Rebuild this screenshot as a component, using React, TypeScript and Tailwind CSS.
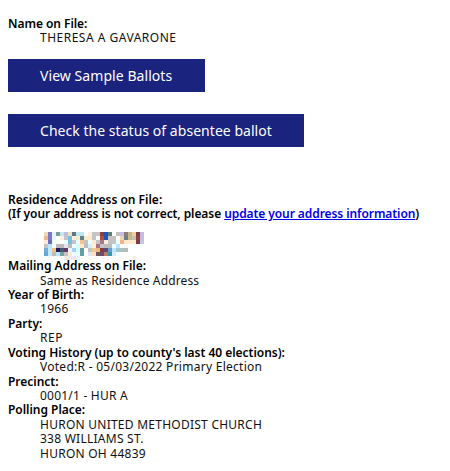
import React from "react";

// Pixelated block drawn over the hidden street address, 4px per cell
const redactedRows = [
  ["#f2d8b4", "#7c78c4", "#dff3fb", "#7f9a98", "#c5e6ec", "#bfbce2", "#e6e4c4", "#64747c", "#bfe6ee", "#bfe6ee", "#ffffff", "#fff0dc", "#c4c4c4", "#c4c4c4", "#8c4038", "#2454b8", "#5c807c", "#ffffff", "#c4c4c4", "#c8bce0", "#8c7c78", "#c4b490", "#ecd0a0", "#7c3c40", "#c4bce4"],
  ["#ecb888", "#7c78c4", "#e8f4ff", "#ffffff", "#fff0e4", "#c4c4c4", "#74c0e0", "#fff0dc", "#ffe8cc", "#5c8488", "#fde8cc", "#ffe8cc", "#c4c4c4", "#ffffff", "#b45038", "#2454b8", "#c4c4c4", "#c4c4c4", "#ffffff", "#f0d4b0", "#64808c", "#ccb888", "#c4c4b4", "#8c4040", "#c4bce4"],
  ["#ffe8cc", "#6c6cb8", "#eaffff", "#fffff0", "#ffffff", "#eaffff", "#74bce0", "#c4c4c4", "#eaffff", "#f0c490", "#c4c4c4", "#eaffff", "#ffe8d8", "#c4c4c4", "#ac7888", "#fff0dc", "#c4c4c4", "#c4c4c4", "#eaffff", "#ecb888", "#ffe8cc", "#ffe8cc", "#ffe8d0", "#7c3c40", "#bcc8e4"],
  ["#c4c4c4", "#bce4fc", "#f4ffff", "#bcbcc0", "#bcbcbc", "#e4e4ec", "#bcbcbc", "#eefcff", "#d4ffff", "#ffe8cc", "#bcbcbc", "#d4f0ff", "#fff0dc", "#ac7480", "#c4c4c4", "#bcbcbc", "#bcbcbc", "#eaffff", "#bce4fc", "#ffffff", "#fff8f0", "#ffffff", "#f8ffff", "#ffffff", "#ffffff"],
  ["#74acdc", "#c4e8ff", "#ecc47c", "#241c58", "#405c74", "#643c60", "#ecf4ff", "#a4d4f0", "#d8ffff", "#649ca0", "#ffffff", "#c4c4c4", "#eccc98", "#ecb880", "#844038", "#5c4c74", "#6c9ccc", "#bce4ff", "#9cc8d4", "#acc4bc", "#b4bcb8", "#ffffff", "#ffffff", "#ffffff", "#ffffff"],
  ["#64a8dc", "#c4e8ff", "#c4bcb0", "#bce4ff", "#74a4a4", "#c4c4c4", "#ffe8d0", "#eaffff", "#eaffff", "#64a0a4", "#ffffff", "#dce8f0", "#ffe0bc", "#6c5860", "#6c4c70", "#bc8060", "#2c9cb4", "#dce8ff", "#eaffff", "#ffffff", "#ffffff", "#ffffff", "#ffffff", "#ffffff", "#ffffff"],
  ["#ffffff", "#ffffff", "#ffffff", "#ffffff", "#ffffff", "#f0e8e4", "#ece8e8", "#ece8f0", "#eaf4ff", "#ffffff", "#ffffff", "#ffffff", "#ffffff", "#ffffff", "#ffffff", "#ffffff", "#ffffff", "#ffffff", "#ffffff", "#ffffff", "#ffffff", "#ffffff", "#faece8", "#ffffff", "#ffffff"],
];

const details = [
  { label: "Mailing Address on File:", lines: ["Same as Residence Address"], tracking: "tracking-[0.14px]" },
  { label: "Year of Birth:", lines: ["1966"], tracking: "tracking-[0.3px]" },
  { label: "Party:", lines: ["REP"], tracking: "tracking-[0.5px]" },
  { label: "Voting History (up to county's last 40 elections):", lines: ["Voted:R - 05/03/2022 Primary Election"], tracking: "tracking-[0.27px]" },
  { label: "Precinct:", lines: ["0001/1 - HUR A"], tracking: "tracking-[0.22px]" },
  { label: "Polling Place:", lines: ["HURON UNITED METHODIST CHURCH", "338 WILLIAMS ST.", "HURON OH 44839"], tracking: "tracking-[0.25px]" },
];

export default function App() {
  return (
    <main className="h-[471px] w-[450px] overflow-hidden bg-white px-2 pt-[17px] font-['Noto_Sans',sans-serif] text-[12px] leading-[14.42px] text-[#111]">
      <dl>
        <dt className="font-semibold tracking-[-0.05px] text-black">Name on File:</dt>
        <dd className="pl-8 tracking-[0.5px]">THERESA A GAVARONE</dd>
      </dl>
      <div className="mt-[13px] flex flex-col items-start gap-[22px] text-[14px] text-white">
        <button className="h-[33px] w-[196.5px] bg-[#1a237e] pt-0.5 pl-8 text-left tracking-[0.06px]">View Sample Ballots</button>
        <button className="h-[33px] w-[296px] bg-[#1a237e] pt-0.5 pl-8 text-left tracking-[0.04px]">Check the status of absentee ballot</button>
      </div>
      <dl className="mt-[46px] whitespace-nowrap">
        <dt className="font-semibold text-black">
          Residence Address on File:
          <br />
          <span className="tracking-[-0.08px]">
            (If your address is not correct, please{" "}
            <a href="#" className="text-[#0000ee] underline">update your address information</a>)
          </span>
        </dt>
        <dd className="mt-[10px] mb-[2.5px] ml-9 h-[25px]">
          {redactedRows.map((row, y) => (
            <div key={y} className="flex">
              {row.map((color, x) => (
                <span key={x} className="h-1 w-1" style={{ backgroundColor: color }} />
              ))}
            </div>
          ))}
        </dd>
        {details.map(({ label, lines, tracking }) => (
          <React.Fragment key={label}>
            <dt className="font-semibold tracking-[-0.02px] text-black">{label}</dt>
            {lines.map((line) => (
              <dd key={line} className={`pl-8 ${tracking}`}>{line}</dd>
            ))}
          </React.Fragment>
        ))}
      </dl>
    </main>
  );
}
